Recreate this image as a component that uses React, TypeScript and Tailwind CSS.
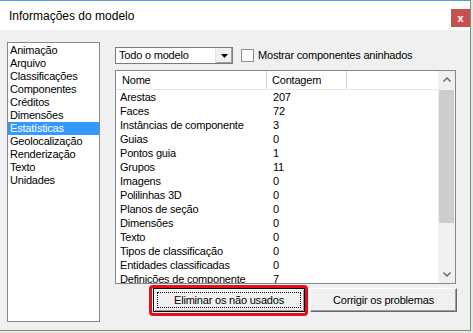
import React from 'react';

const categories = [
  'Animação',
  'Arquivo',
  'Classificações',
  'Componentes',
  'Créditos',
  'Dimensões',
  'Estatísticas',
  'Geolocalização',
  'Renderização',
  'Texto',
  'Unidades',
];

const stats: [string, string][] = [
  ['Arestas', '207'],
  ['Faces', '72'],
  ['Instâncias de componente', '3'],
  ['Guias', '0'],
  ['Pontos guia', '1'],
  ['Grupos', '11'],
  ['Imagens', '0'],
  ['Polilinhas 3D', '0'],
  ['Planos de seção', '0'],
  ['Dimensões', '0'],
  ['Texto', '0'],
  ['Tipos de classificação', '0'],
  ['Entidades classificadas', '0'],
  ['Definições de componente', '7'],
];

const font = { fontFamily: '"Liberation Sans", Arial, sans-serif' };

export default function App() {
  return (
    <div className="w-[473px] h-[333px] bg-[#e6eae3] overflow-hidden" style={font}>
      <div className="w-[471px] h-[331px] flex flex-col bg-[#f0f0f0] border-r border-b border-[#7b8c74]">
        {/* title bar */}
        <div className="h-[30px] shrink-0 bg-white border-t border-[#5a9bd5] flex items-start justify-between">
          <span className="text-[12px] leading-[14px] text-black mt-[8px] ml-[9px]">Informações do modelo</span>
          <div className="w-[19px] h-[18px] mt-[8px] bg-[#c75050] flex items-center justify-center text-white text-[11px] leading-none font-bold">
            x
          </div>
        </div>

        {/* body */}
        <div className="flex-1 flex pl-[7px] pt-[12px] text-[11px] tracking-[-0.2px] text-black">
          {/* category list */}
          <div className="w-[93px] h-[280px] shrink-0 bg-white border border-[#828790] pt-[1px]">
            {categories.map((c) => (
              <div
                key={c}
                className={`h-[13px] leading-[13px] pl-[2px] ${c === 'Estatísticas' ? 'bg-[#3399ff] text-white' : ''}`}
              >
                {c}
              </div>
            ))}
          </div>

          <div className="ml-[15px] flex flex-col">
            {/* top row */}
            <div className="flex items-center mt-[5px] h-[17px]">
              <div className="w-[118px] h-[17px] bg-white border border-[#7a7a7a] flex items-center">
                <span className="flex-1 pl-[3px] leading-[13px]">Todo o modelo</span>
                <div className="w-[17px] h-[15px] bg-[#f0f0f0] border-l border-[#e3e3e3] shadow-[inset_-1px_-1px_0_#a0a0a0] flex items-center justify-center">
                  <svg width="7" height="4" viewBox="0 0 7 4">
                    <path d="M0 0h7L3.5 4z" fill="#000" />
                  </svg>
                </div>
              </div>
              <div className="ml-[8px] w-[13px] h-[13px] bg-white border border-[#8f8f8f]" />
              <span className="ml-[4px] leading-[13px]">Mostrar componentes aninhados</span>
            </div>

            {/* list view */}
            <div className="mt-[6px] w-[341px] h-[214px] bg-white border border-[#828790] flex overflow-hidden">
              <div className="flex-1 flex flex-col">
                <div className="h-[19px] shrink-0 flex border-b border-[#e5e5e5]">
                  <div className="w-[151px] pl-[6px] leading-[18px] border-r border-[#d5d5d5]">Nome</div>
                  <div className="w-[80px] pl-[5px] leading-[18px] border-r border-[#d5d5d5]">Contagem</div>
                  <div className="flex-1" />
                </div>
                {stats.map(([n, v]) => (
                  <div key={n} className="h-[14px] shrink-0 flex leading-[14px]">
                    <div className="w-[151px] pl-[4px] whitespace-nowrap overflow-hidden">{n}</div>
                    <div className="pl-[6px]">{v}</div>
                  </div>
                ))}
              </div>
              {/* scrollbar */}
              <div className="w-[17px] shrink-0 bg-[#f0f0f0] flex flex-col">
                <div className="h-[17px] flex items-center justify-center">
                  <svg width="8" height="5" viewBox="0 0 8 5">
                    <path d="M0.5 4.5L4 1l3.5 3.5" fill="none" stroke="#606060" strokeWidth="1.3" />
                  </svg>
                </div>
                <div className="mt-[2px] mx-[1px] h-[133px] bg-[#cdcdcd]" />
                <div className="flex-1" />
                <div className="h-[17px] flex items-center justify-center">
                  <svg width="8" height="5" viewBox="0 0 8 5">
                    <path d="M0.5 0.5L4 4l3.5-3.5" fill="none" stroke="#606060" strokeWidth="1.3" />
                  </svg>
                </div>
              </div>
            </div>

            {/* buttons */}
            <div className="mt-[4px] ml-[38px] flex gap-[5px]">
              <div className="relative">
                <button className="w-[152px] h-[24px] bg-[#f0f0f0] border border-black shadow-[inset_1px_1px_0_#fff,inset_-1px_-1px_0_#a0a0a0] p-[3px]">
                  <div className="w-full h-full border border-dotted border-black flex items-center justify-center leading-[13px]">
                    Eliminar os não usados
                  </div>
                </button>
                <div className="absolute left-[-4px] top-[-3px] w-[159px] h-[31px] border-[3px] border-[#e3101a] rounded-[4px]" />
              </div>
              <button className="w-[147px] h-[24px] bg-[#f0f0f0] border border-t-white border-l-white border-r-[#696969] border-b-[#696969] shadow-[inset_-1px_-1px_0_#a0a0a0] flex items-center justify-center leading-[13px]">
                Corrigir os problemas
              </button>
            </div>
          </div>
        </div>
      </div>
    </div>
  );
}
